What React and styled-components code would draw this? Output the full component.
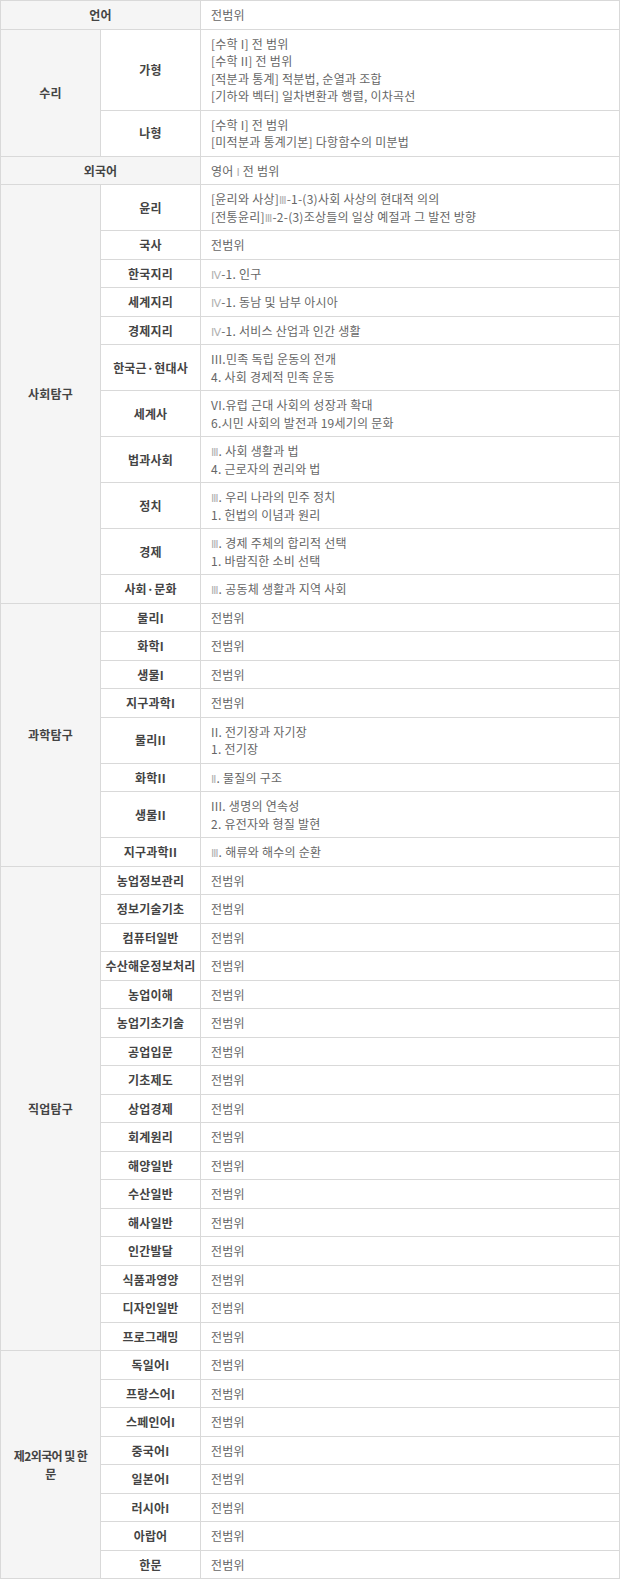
import styled, {createGlobalStyle} from "styled-components"

const GlobalStyle = createGlobalStyle`
  html, body {
    margin: 0;
    padding: 0;
    background: #ffffff;
  }

  body {
    font-family: "Noto Sans CJK KR", "Noto Sans", sans-serif;
    font-size: 12px;
    color: #666666;
  }
`

const Table = styled.table`
  width: 620px;
  table-layout: fixed;
  border-collapse: collapse;
  border: 1px solid #d9d9d9;
  line-height: 17.5px;

  td {
    border: 1px solid #d9d9d9;
  }
`

const Label = styled.td`
  padding: 5px 2px;
  text-align: center;
  vertical-align: middle;
  font-weight: 700;
  color: #444444;
  background: ${p => (p.$sub ? "#ffffff" : "#f5f5f5")};
  letter-spacing: ${p => (p.$tight ? "-0.6px" : "0.2px")};
  white-space: ${p => (p.$tight ? "nowrap" : "normal")};
`

const Content = styled.td`
  padding: 5px 10px;
  vertical-align: middle;
  color: #666666;
  letter-spacing: 0.25px;
`

const Line = styled.div`
  white-space: nowrap;
  height: 17.5px;
`

const Dim = styled.span`
  font-family: "DejaVu Sans", sans-serif;
  font-size: 11px;
  line-height: 0;
  letter-spacing: 0;
  color: #b0b0b0;
`

const ALL = ["전범위"]

const groups = [
    {title: "언어", merged: true, items: [{lines: ALL}]},
    {
        title: "수리", items: [
            {name: "가형", lines: ["[수학 I] 전 범위", "[수학 II] 전 범위", "[적분과 통계] 적분법, 순열과 조합", "[기하와 벡터] 일차변환과 행렬, 이차곡선"]},
            {name: "나형", lines: ["[수학 I] 전 범위", "[미적분과 통계기본] 다항함수의 미분법"]},
        ]
    },
    {title: "외국어", merged: true, items: [{lines: ["영어 Ⅰ 전 범위"]}]},
    {
        title: "사회탐구", items: [
            {name: "윤리", lines: ["[윤리와 사상]Ⅲ-1-(3)사회 사상의 현대적 의의", "[전통윤리]Ⅲ-2-(3)조상들의 일상 예절과 그 발전 방향"]},
            {name: "국사", lines: ALL},
            {name: "한국지리", lines: ["Ⅳ-1. 인구"]},
            {name: "세계지리", lines: ["Ⅳ-1. 동남 및 남부 아시아"]},
            {name: "경제지리", lines: ["Ⅳ-1. 서비스 산업과 인간 생활"]},
            {name: "한국근·현대사", lines: ["III.민족 독립 운동의 전개", "4. 사회 경제적 민족 운동"]},
            {name: "세계사", lines: ["VI.유럽 근대 사회의 성장과 확대", "6.시민 사회의 발전과 19세기의 문화"]},
            {name: "법과사회", lines: ["Ⅲ. 사회 생활과 법", "4. 근로자의 권리와 법"]},
            {name: "정치", lines: ["Ⅲ. 우리 나라의 민주 정치", "1. 헌법의 이념과 원리"]},
            {name: "경제", lines: ["Ⅲ. 경제 주체의 합리적 선택", "1. 바람직한 소비 선택"]},
            {name: "사회·문화", lines: ["Ⅲ. 공동체 생활과 지역 사회"]},
        ]
    },
    {
        title: "과학탐구", items: [
            {name: "물리I", lines: ALL},
            {name: "화학I", lines: ALL},
            {name: "생물I", lines: ALL},
            {name: "지구과학I", lines: ALL},
            {name: "물리II", lines: ["II. 전기장과 자기장", "1. 전기장"]},
            {name: "화학II", lines: [" Ⅱ. 물질의 구조"]},
            {name: "생물II", lines: ["III. 생명의 연속성", "2. 유전자와 형질 발현"]},
            {name: "지구과학II", lines: ["Ⅲ. 해류와 해수의 순환"]},
        ]
    },
    {
        title: "직업탐구", items: [
            "농업정보관리", "정보기술기초", "컴퓨터일반", "수산해운정보처리", "농업이해", "농업기초기술",
            "공업입문", "기초제도", "상업경제", "회계원리", "해양일반", "수산일반", "해사일반",
            "인간발달", "식품과영양", "디자인일반", "프로그래밍",
        ].map(name => ({name, lines: ALL}))
    },
    {
        title: ["제2외국어 및 한", "문"], items: [
            "독일어I", "프랑스어I", "스페인어I", "중국어I", "일본어I", "러시아I", "아랍어", "한문",
        ].map(name => ({name, lines: ALL}))
    },
]

// roman numeral glyphs (Ⅰ..Ⅻ) are drawn lighter, as in the source page
const renderLine = text =>
    text.split(/([\u2160-\u216B])/).map((part, i) =>
        /[\u2160-\u216B]/.test(part) ? <Dim key={i}>{part}</Dim> : part)

const Lines = ({lines}) => lines.map((l, i) => <Line key={i}>{renderLine(l)}</Line>)

const Title = ({title}) =>
    Array.isArray(title) ? title.map((t, i) => <span key={i}>{t}{i < title.length - 1 && <br/>}</span>) : title

const App = () => {
    return (<>
        <GlobalStyle/>
        <Table>
            <colgroup>
                <col style={{width: 100}}/>
                <col style={{width: 100}}/>
                <col/>
            </colgroup>
            <tbody>
            {groups.map(g => g.merged ? (
                <tr key={g.title}>
                    <Label colSpan={2}>{g.title}</Label>
                    <Content><Lines lines={g.items[0].lines}/></Content>
                </tr>
            ) : g.items.map((item, i) => (
                <tr key={item.name}>
                    {i === 0 && (
                        <Label rowSpan={g.items.length} $tight={Array.isArray(g.title)}>
                            <Title title={g.title}/>
                        </Label>
                    )}
                    <Label $sub>{item.name}</Label>
                    <Content><Lines lines={item.lines}/></Content>
                </tr>
            )))}
            </tbody>
        </Table>
    </>);
}

export default App
